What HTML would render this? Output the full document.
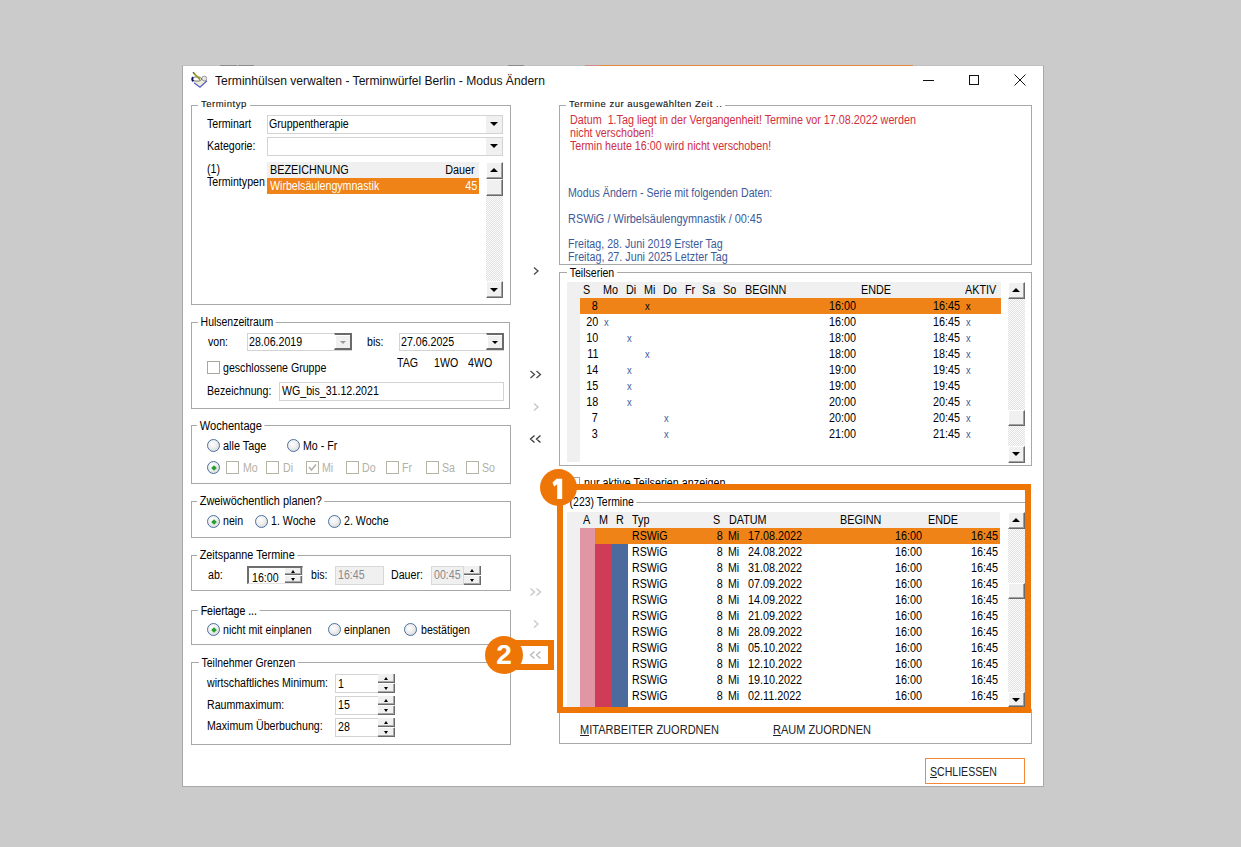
<!DOCTYPE html>
<html><head><meta charset="utf-8">
<style>
html,body{margin:0;padding:0}
body{width:1241px;height:847px;background:#cbcbcb;position:relative;overflow:hidden;font-family:"Liberation Sans",sans-serif}
div{box-sizing:border-box}
.a{position:absolute}
.t{position:absolute;font-size:12px;line-height:14px;white-space:pre;transform-origin:0 0;transform:scaleX(.885);color:#000}
.tr{position:absolute;font-size:12px;line-height:14px;white-space:pre;transform-origin:100% 0;transform:scaleX(.90);color:#000;text-align:right}
.lg{position:absolute;font-size:9.5px;line-height:12px;white-space:pre;letter-spacing:.5px;-webkit-text-stroke:.1px #111;background:#fff;padding:0 3px;color:#111}
.gb{position:absolute;border:1px solid #a8a8a8}
.gl{background:#fff;padding:0 3px}
.rad{position:absolute;width:13px;height:13px;border-radius:50%;border:1.6px solid #4a719e;background:radial-gradient(circle at 40% 35%,#fff 0,#eee 45%,#cfcfcf 100%)}
.rad.on::after{content:"";position:absolute;left:3.6px;top:3.6px;width:4px;height:4px;background:#22a22a;transform:rotate(45deg)}
.chk{position:absolute;width:13px;height:13px;border:1px solid #b5b3a6;background:#fff}
.fld{position:absolute;border:1px solid #d3d3d3;background:#fff}
.dd{position:absolute;background:#f0f0f0}
.tri{position:absolute;width:0;height:0;border-left:4px solid transparent;border-right:4px solid transparent;border-top:4px solid #000}
.triu{position:absolute;width:0;height:0;border-left:4px solid transparent;border-right:4px solid transparent;border-bottom:4px solid #000}
.btn3{position:absolute;background:#f0f0f0;border-top:1px solid #fff;border-left:1px solid #fff;border-right:1px solid #696969;border-bottom:1px solid #696969;box-shadow:inset -1px -1px 0 #a0a0a0}
.track{position:absolute;background:repeating-conic-gradient(#e2e2e2 0 25%,#fbfbfb 0 50%) 0 0/2px 2px}
.or{background:#ef8318}
.sp{position:absolute;background:#f0f0f0;border-right:1px solid #6a6a6a;border-bottom:1px solid #6a6a6a;box-shadow:inset -1px -1px 0 #a8a8a8}
.sa{position:absolute;width:0;height:0;border-left:2.5px solid transparent;border-right:2.5px solid transparent}
</style></head><body>
<div class="a" style="left:182px;top:65px;width:862px;height:722px;background:#fff;border:1px solid #a9a9a9;border-top-color:#c0c0c0"></div>
<div class="a" style="left:220px;top:65px;width:17px;height:1px;background:#8c8c8c"></div>
<div class="a" style="left:238px;top:65px;width:16px;height:1px;background:#8c8c8c"></div>
<div class="a" style="left:508px;top:65px;width:16px;height:1px;background:#8c8c8c"></div>
<div class="a" style="left:585px;top:65px;width:15px;height:1px;background:#d08a8a"></div>
<div class="a" style="left:600px;top:65px;width:313px;height:1px;background:#e58a3a"></div>
<svg class="a" style="left:186px;top:68px" width="26" height="24" viewBox="0 0 26 24">
<path d="M8 13.5 L14.5 9.8 L21 12.3 L14 19.3 Z" fill="#efeed2"/>
<path d="M8 14.8 L14 19.3 L21 12.8" fill="none" stroke="#5558c8" stroke-width="1.2"/>
<circle cx="18.3" cy="10.5" r="2.4" fill="#e8e8e8" stroke="#777" stroke-width="0.7"/>
<ellipse cx="11" cy="11" rx="4.6" ry="2.1" fill="#fff" stroke="#666" stroke-width="0.9"/>
<path d="M7.2 9.3 Q5.2 11.2 7.4 13.4" fill="none" stroke="#12136a" stroke-width="2"/>
<path d="M7.4 4.8 L14.2 11.6" stroke="#9c9a2c" stroke-width="1.9"/>
<path d="M7 4.2 L8 5.2" stroke="#666" stroke-width="1.6"/>
</svg>
<div class="a" style="left:215px;top:74px;font-size:12px;line-height:14px;white-space:pre;color:#111;transform-origin:0 0;transform:scaleX(1.008)">Terminhülsen verwalten - Terminwürfel Berlin - Modus Ändern</div>
<div class="a" style="left:923px;top:80px;width:11px;height:1px;background:#111"></div>
<div class="a" style="left:969px;top:75px;width:10px;height:10px;border:1px solid #111"></div>
<svg class="a" style="left:1014px;top:74px" width="12" height="12" viewBox="0 0 12 12"><path d="M0.5 0.5 L11.5 11.5 M11.5 0.5 L0.5 11.5" stroke="#111" stroke-width="1"/></svg>
<div class="gb" style="left:191px;top:105px;width:320px;height:200px;"></div>
<div class="lg" style="left:198px;top:98px">Termintyp</div>
<div class="t" style="left:207px;top:117px">Terminart</div>
<div class="fld" style="left:267px;top:115px;width:236px;height:19px;"></div>
<div class="dd" style="left:486px;top:116px;width:16px;height:17px;"></div>
<div class="tri" style="left:490px;top:122px"></div>
<div class="t" style="left:269px;top:117px">Gruppentherapie</div>
<div class="t" style="left:207px;top:139px">Kategorie:</div>
<div class="fld" style="left:267px;top:137px;width:236px;height:19px;"></div>
<div class="dd" style="left:486px;top:138px;width:16px;height:17px;"></div>
<div class="tri" style="left:490px;top:144px"></div>
<div class="t" style="left:207px;top:162px">(1)</div>
<div class="t" style="left:207px;top:175px">Termintypen</div>
<div class="a" style="left:267px;top:162px;width:212px;height:16px;background:#f0f0f0"></div>
<div class="t" style="left:270px;top:163px;transform:scaleX(0.9)">BEZEICHNUNG</div>
<div class="tr" style="right:766px;top:163px">Dauer</div>
<div class="a or" style="left:267px;top:178px;width:212px;height:16px;"></div>
<div class="t" style="left:270px;top:179px;color:#fff">Wirbelsäulengymnastik</div>
<div class="tr" style="right:764px;top:179px;color:#fff">45</div>
<div class="track" style="left:486px;top:162px;width:17px;height:136px;"></div>
<div class="btn3" style="left:486px;top:162px;width:17px;height:17px;"></div>
<div class="triu" style="left:490px;top:168px"></div>
<div class="btn3" style="left:486px;top:179px;width:17px;height:17px;"></div>
<div class="btn3" style="left:486px;top:281px;width:17px;height:17px;"></div>
<div class="tri" style="left:490px;top:288px"></div>
<div class="gb" style="left:191px;top:322px;width:319px;height:87px;"></div>
<div class="t gl" style="left:198px;top:315px;transform:scaleX(0.872)">Hulsenzeitraum</div>
<div class="t" style="left:208px;top:335px">von:</div>
<div class="fld" style="left:247px;top:333px;width:105px;height:18px;"></div>
<div class="t" style="left:249px;top:335px">28.06.2019</div>
<div class="a" style="left:334px;top:333px;width:18px;height:17px;background:#f0f0f0;border-top:2px solid #6a6a6a;border-right:2px solid #6a6a6a;border-bottom:2px solid #6a6a6a;border-left:1px solid #fff;box-shadow:inset 1px 1px 0 #fff"></div>
<div class="tri" style="left:340px;top:341px;border-left-width:3px;border-right-width:3px;border-top:3px solid #999"></div>
<div class="t" style="left:367px;top:335px">bis:</div>
<div class="fld" style="left:399px;top:333px;width:105px;height:18px;"></div>
<div class="t" style="left:401px;top:335px">27.06.2025</div>
<div class="a" style="left:486px;top:333px;width:18px;height:17px;background:#f0f0f0;border-top:2px solid #6a6a6a;border-right:2px solid #6a6a6a;border-bottom:2px solid #6a6a6a;border-left:1px solid #fff;box-shadow:inset 1px 1px 0 #fff"></div>
<div class="tri" style="left:492px;top:341px;border-left-width:3px;border-right-width:3px;border-top:3px solid #000"></div>
<div class="t" style="left:397px;top:356px">TAG</div>
<div class="t" style="left:434px;top:356px">1WO</div>
<div class="t" style="left:468px;top:356px">4WO</div>
<div class="chk" style="left:207px;top:361px;width:13px;height:13px;border-color:#a8a8a0"></div>
<div class="t" style="left:223px;top:361px">geschlossene Gruppe</div>
<div class="t" style="left:207px;top:384px">Bezeichnung:</div>
<div class="fld" style="left:279px;top:382px;width:225px;height:19px;"></div>
<div class="t" style="left:282px;top:384px">WG_bis_31.12.2021</div>
<div class="gb" style="left:191px;top:425px;width:320px;height:59px;"></div>
<div class="t gl" style="left:197px;top:419px;transform:scaleX(0.925)">Wochentage</div>
<div class="rad" style="left:207px;top:439px;width:13px;height:13px;"></div>
<div class="t" style="left:223px;top:439px;transform:scaleX(0.907)">alle Tage</div>
<div class="rad" style="left:287px;top:439px;width:13px;height:13px;"></div>
<div class="t" style="left:303px;top:439px">Mo - Fr</div>
<div class="rad on" style="left:207px;top:461px;width:13px;height:13px;"></div>
<div class="chk" style="left:226px;top:461px;width:13px;height:13px;"></div>
<div class="t" style="left:243px;top:461px;color:#b3b1a6">Mo</div>
<div class="chk" style="left:266px;top:461px;width:13px;height:13px;"></div>
<div class="t" style="left:283px;top:461px;color:#b3b1a6">Di</div>
<div class="chk" style="left:306px;top:461px;width:13px;height:13px;"></div>
<div class="t" style="left:322px;top:461px;color:#b3b1a6">Mi</div>
<div class="chk" style="left:346px;top:461px;width:13px;height:13px;"></div>
<div class="t" style="left:362px;top:461px;color:#b3b1a6">Do</div>
<div class="chk" style="left:386px;top:461px;width:13px;height:13px;"></div>
<div class="t" style="left:402px;top:461px;color:#b3b1a6">Fr</div>
<div class="chk" style="left:426px;top:461px;width:13px;height:13px;"></div>
<div class="t" style="left:442px;top:461px;color:#b3b1a6">Sa</div>
<div class="chk" style="left:466px;top:461px;width:13px;height:13px;"></div>
<div class="t" style="left:482px;top:461px;color:#b3b1a6">So</div>
<svg class="a" style="left:307px;top:462px" width="11" height="11"><path d="M2 5 L4.5 8 L9 2.5" fill="none" stroke="#b3b1a6" stroke-width="1.6"/></svg>
<div class="gb" style="left:191px;top:501px;width:320px;height:37px;"></div>
<div class="t gl" style="left:197px;top:494px;transform:scaleX(0.91)">Zweiwöchentlich planen?</div>
<div class="rad on" style="left:207px;top:515px;width:13px;height:13px;"></div>
<div class="t" style="left:223px;top:514px">nein</div>
<div class="rad" style="left:255px;top:515px;width:13px;height:13px;"></div>
<div class="t" style="left:271px;top:514px">1. Woche</div>
<div class="rad" style="left:328px;top:515px;width:13px;height:13px;"></div>
<div class="t" style="left:344px;top:514px">2. Woche</div>
<div class="gb" style="left:191px;top:555px;width:320px;height:36px;"></div>
<div class="t gl" style="left:196.5px;top:548px;transform:scaleX(0.903)">Zeitspanne Termine</div>
<div class="t" style="left:208px;top:568px">ab:</div>
<div class="a" style="left:247px;top:566px;width:56px;height:18px;background:#fff;border-top:2px solid #6e6e6e;border-left:2px solid #6e6e6e;border-right:1px solid #e4e4e4;border-bottom:1px solid #e4e4e4"></div>
<div class="t" style="left:252px;top:571px">16:00</div>
<div class="sp" style="left:285px;top:568px;width:17px;height:7px;"></div>
<div class="sp" style="left:285px;top:576px;width:17px;height:7px;"></div>
<div class="sa" style="left:291.0px;top:570.0px;border-bottom:3px solid #000"></div>
<div class="sa" style="left:291.0px;top:578.0px;border-top:3px solid #000"></div>
<div class="t" style="left:311px;top:568px">bis:</div>
<div class="a" style="left:335px;top:566px;width:49px;height:19px;background:#f0f0f0;border:1px solid #d8d8d8"></div>
<div class="t" style="left:338px;top:568px;color:#8a8a8a">16:45</div>
<div class="t" style="left:391px;top:568px">Dauer:</div>
<div class="a" style="left:431px;top:566px;width:33px;height:19px;background:#f0f0f0;border:1px solid #d8d8d8"></div>
<div class="t" style="left:434px;top:568px;color:#8a8a8a">00:45</div>
<div class="sp" style="left:464px;top:566px;width:17px;height:9px;"></div>
<div class="sp" style="left:464px;top:576px;width:17px;height:9px;"></div>
<div class="sa" style="left:470.0px;top:569.0px;border-bottom:3px solid #000"></div>
<div class="sa" style="left:470.0px;top:579.0px;border-top:3px solid #000"></div>
<div class="gb" style="left:191px;top:610px;width:320px;height:35px;"></div>
<div class="t gl" style="left:197.5px;top:604px;transform:scaleX(0.88);-webkit-text-stroke:.1px #000">Feiertage ...</div>
<div class="rad on" style="left:207px;top:623px;width:13px;height:13px;"></div>
<div class="t" style="left:223px;top:623px">nicht mit einplanen</div>
<div class="rad" style="left:328px;top:623px;width:13px;height:13px;"></div>
<div class="t" style="left:344px;top:623px">einplanen</div>
<div class="rad" style="left:404px;top:623px;width:13px;height:13px;"></div>
<div class="t" style="left:421px;top:623px">bestätigen</div>
<div class="gb" style="left:191px;top:662px;width:320px;height:83px;"></div>
<div class="t gl" style="left:199px;top:656px;transform:scaleX(0.868)">Teilnehmer Grenzen</div>
<div class="t" style="left:207px;top:676px">wirtschaftliches Minimum:</div>
<div class="fld" style="left:335px;top:674px;width:60px;height:19px;"></div>
<div class="t" style="left:338px;top:677px">1</div>
<div class="sp" style="left:378px;top:674px;width:17px;height:9px;"></div>
<div class="sp" style="left:378px;top:684px;width:17px;height:9px;"></div>
<div class="sa" style="left:384.0px;top:677.0px;border-bottom:3px solid #000"></div>
<div class="sa" style="left:384.0px;top:687.0px;border-top:3px solid #000"></div>
<div class="t" style="left:207px;top:698px">Raummaximum:</div>
<div class="fld" style="left:335px;top:696px;width:60px;height:19px;"></div>
<div class="t" style="left:338px;top:698px">15</div>
<div class="sp" style="left:378px;top:696px;width:17px;height:9px;"></div>
<div class="sp" style="left:378px;top:706px;width:17px;height:9px;"></div>
<div class="sa" style="left:384.0px;top:699.0px;border-bottom:3px solid #000"></div>
<div class="sa" style="left:384.0px;top:709.0px;border-top:3px solid #000"></div>
<div class="t" style="left:207px;top:719px">Maximum Überbuchung:</div>
<div class="fld" style="left:335px;top:718px;width:60px;height:19px;"></div>
<div class="t" style="left:338px;top:720px">28</div>
<div class="sp" style="left:378px;top:718px;width:17px;height:9px;"></div>
<div class="sp" style="left:378px;top:728px;width:17px;height:9px;"></div>
<div class="sa" style="left:384.0px;top:721.0px;border-bottom:3px solid #000"></div>
<div class="sa" style="left:384.0px;top:731.0px;border-top:3px solid #000"></div>
<svg class="a" style="left:528px;top:264px" width="16" height="400" viewBox="0 0 16 400">
<g fill="none" stroke-width="1.3">
<path d="M6 3.5 L10 7 L6 10.5" stroke="#4a4a4a"/>
<path d="M2.5 107 L6.5 110.5 L2.5 114 M8.5 107 L12.5 110.5 L8.5 114" stroke="#4a4a4a"/>
<path d="M6 139.5 L10 143 L6 146.5" stroke="#c4c4c4"/>
<path d="M6.5 171.5 L2.5 175 L6.5 178.5 M12.5 171.5 L8.5 175 L12.5 178.5" stroke="#3a3a3a"/>
<path d="M2.5 324.5 L6.5 328 L2.5 331.5 M8.5 324.5 L12.5 328 L8.5 331.5" stroke="#c8c8c8"/>
<path d="M6 356.5 L10 360 L6 363.5" stroke="#c8c8c8"/>
<path d="M6.5 387.5 L2.5 391 L6.5 394.5 M12.5 387.5 L8.5 391 L12.5 394.5" stroke="#b8b8b8"/>
</g></svg>
<div class="gb" style="left:559px;top:105px;width:473px;height:160px;"></div>
<div class="lg" style="left:566px;top:98px">Termine zur ausgewählten Zeit ..</div>
<div class="t" style="left:570px;top:113px;transform:scaleX(0.896);color:#d02e3e">Datum  1.Tag liegt in der Vergangenheit! Termine vor 17.08.2022 werden</div>
<div class="t" style="left:570px;top:126px;transform:scaleX(0.89);color:#d02e3e">nicht verschoben!</div>
<div class="t" style="left:570px;top:139px;transform:scaleX(0.892);color:#d02e3e">Termin heute 16:00 wird nicht verschoben!</div>
<div class="t" style="left:568px;top:186px;color:#3c5a9a">Modus Ändern - Serie mit folgenden Daten:</div>
<div class="t" style="left:568px;top:212px;transform:scaleX(0.909);color:#3c5a9a">RSWiG / Wirbelsäulengymnastik / 00:45</div>
<div class="t" style="left:568px;top:237px;transform:scaleX(0.89);color:#3c5a9a">Freitag, 28. Juni 2019 Erster Tag</div>
<div class="t" style="left:568px;top:250px;transform:scaleX(0.895);color:#3c5a9a">Freitag, 27. Juni 2025 Letzter Tag</div>
<div class="gb" style="left:559px;top:272px;width:473px;height:194px;"></div>
<div class="t gl" style="left:567px;top:266px;transform:scaleX(0.88)">Teilserien</div>
<div class="a" style="left:567px;top:282px;width:434px;height:16px;background:#f0f0f0"></div>
<div class="a" style="left:567px;top:298px;width:13px;height:164px;background:#f0f0f0"></div>
<div class="a or" style="left:580px;top:298px;width:421px;height:16px;"></div>
<div class="t" style="left:583px;top:283px;transform:scaleX(0.9)">S</div>
<div class="t" style="left:603px;top:283px;transform:scaleX(0.9)">Mo</div>
<div class="t" style="left:626px;top:283px;transform:scaleX(0.9)">Di</div>
<div class="t" style="left:644px;top:283px;transform:scaleX(0.9)">Mi</div>
<div class="t" style="left:663px;top:283px;transform:scaleX(0.9)">Do</div>
<div class="t" style="left:685px;top:283px;transform:scaleX(0.9)">Fr</div>
<div class="t" style="left:702px;top:283px;transform:scaleX(0.9)">Sa</div>
<div class="t" style="left:723px;top:283px;transform:scaleX(0.9)">So</div>
<div class="t" style="left:745px;top:283px;transform:scaleX(0.9)">BEGINN</div>
<div class="t" style="left:861px;top:283px;transform:scaleX(0.9)">ENDE</div>
<div class="t" style="left:965px;top:283px;transform:scaleX(0.9)">AKTIV</div>
<div class="tr" style="right:643px;top:299px">8</div>
<div class="t" style="left:645px;top:299px;transform:scaleX(0.85);color:#000;font-size:11px">x</div>
<div class="tr" style="right:385px;top:299px">16:00</div>
<div class="tr" style="right:281px;top:299px">16:45</div>
<div class="t" style="left:966px;top:299px;transform:scaleX(0.85);color:#000;font-size:11px">x</div>
<div class="tr" style="right:643px;top:315px">20</div>
<div class="t" style="left:604px;top:315px;transform:scaleX(0.85);color:#3c5a9a;font-size:11px">x</div>
<div class="tr" style="right:385px;top:315px">16:00</div>
<div class="tr" style="right:281px;top:315px">16:45</div>
<div class="t" style="left:966px;top:315px;transform:scaleX(0.85);color:#3c5a9a;font-size:11px">x</div>
<div class="tr" style="right:643px;top:331px">10</div>
<div class="t" style="left:627px;top:331px;transform:scaleX(0.85);color:#3c5a9a;font-size:11px">x</div>
<div class="tr" style="right:385px;top:331px">18:00</div>
<div class="tr" style="right:281px;top:331px">18:45</div>
<div class="t" style="left:966px;top:331px;transform:scaleX(0.85);color:#3c5a9a;font-size:11px">x</div>
<div class="tr" style="right:643px;top:347px">11</div>
<div class="t" style="left:645px;top:347px;transform:scaleX(0.85);color:#3c5a9a;font-size:11px">x</div>
<div class="tr" style="right:385px;top:347px">18:00</div>
<div class="tr" style="right:281px;top:347px">18:45</div>
<div class="t" style="left:966px;top:347px;transform:scaleX(0.85);color:#3c5a9a;font-size:11px">x</div>
<div class="tr" style="right:643px;top:363px">14</div>
<div class="t" style="left:627px;top:363px;transform:scaleX(0.85);color:#3c5a9a;font-size:11px">x</div>
<div class="tr" style="right:385px;top:363px">19:00</div>
<div class="tr" style="right:281px;top:363px">19:45</div>
<div class="t" style="left:966px;top:363px;transform:scaleX(0.85);color:#3c5a9a;font-size:11px">x</div>
<div class="tr" style="right:643px;top:379px">15</div>
<div class="t" style="left:627px;top:379px;transform:scaleX(0.85);color:#3c5a9a;font-size:11px">x</div>
<div class="tr" style="right:385px;top:379px">19:00</div>
<div class="tr" style="right:281px;top:379px">19:45</div>
<div class="tr" style="right:643px;top:395px">18</div>
<div class="t" style="left:627px;top:395px;transform:scaleX(0.85);color:#3c5a9a;font-size:11px">x</div>
<div class="tr" style="right:385px;top:395px">20:00</div>
<div class="tr" style="right:281px;top:395px">20:45</div>
<div class="t" style="left:966px;top:395px;transform:scaleX(0.85);color:#3c5a9a;font-size:11px">x</div>
<div class="tr" style="right:643px;top:411px">7</div>
<div class="t" style="left:664px;top:411px;transform:scaleX(0.85);color:#3c5a9a;font-size:11px">x</div>
<div class="tr" style="right:385px;top:411px">20:00</div>
<div class="tr" style="right:281px;top:411px">20:45</div>
<div class="t" style="left:966px;top:411px;transform:scaleX(0.85);color:#3c5a9a;font-size:11px">x</div>
<div class="tr" style="right:643px;top:427px">3</div>
<div class="t" style="left:664px;top:427px;transform:scaleX(0.85);color:#3c5a9a;font-size:11px">x</div>
<div class="tr" style="right:385px;top:427px">21:00</div>
<div class="tr" style="right:281px;top:427px">21:45</div>
<div class="t" style="left:966px;top:427px;transform:scaleX(0.85);color:#3c5a9a;font-size:11px">x</div>
<div class="track" style="left:1008px;top:282px;width:17px;height:181px;"></div>
<div class="btn3" style="left:1008px;top:282px;width:17px;height:17px;"></div>
<div class="triu" style="left:1012px;top:288px"></div>
<div class="btn3" style="left:1008px;top:410px;width:17px;height:16px;"></div>
<div class="btn3" style="left:1008px;top:446px;width:17px;height:17px;"></div>
<div class="tri" style="left:1012px;top:452px"></div>
<div class="chk" style="left:567px;top:477px;width:13px;height:13px;border-color:#a3a89e"></div>
<div class="t" style="left:584px;top:476px;transform:scaleX(0.896)">nur aktive Teilserien anzeigen</div>
<div class="gb" style="left:559px;top:502px;width:472px;height:209px;"></div>
<div class="t gl" style="left:566.5px;top:495px;transform:scaleX(0.869)">(223) Termine</div>
<div class="a" style="left:567px;top:512px;width:433px;height:16px;background:#f0f0f0"></div>
<div class="a" style="left:567px;top:528px;width:13px;height:179px;background:#f0f0f0"></div>
<div class="a" style="left:580px;top:528px;width:15px;height:179px;background:#e196a5"></div>
<div class="a" style="left:595px;top:544px;width:17px;height:163px;background:#cf3c58"></div>
<div class="a" style="left:612px;top:544px;width:16px;height:163px;background:#4b6a9d"></div>
<div class="a or" style="left:595px;top:528px;width:405px;height:16px;"></div>
<div class="a" style="left:567px;top:512px;width:433px;height:195px;overflow:hidden">
<div class="t" style="left:16px;top:1px;transform:scaleX(0.9)">A</div>
<div class="t" style="left:32px;top:1px;transform:scaleX(0.9)">M</div>
<div class="t" style="left:49px;top:1px;transform:scaleX(0.9)">R</div>
<div class="t" style="left:65px;top:1px;transform:scaleX(0.9)">Typ</div>
<div class="t" style="left:146px;top:1px;transform:scaleX(0.9)">S</div>
<div class="t" style="left:162px;top:1px;transform:scaleX(0.9)">DATUM</div>
<div class="t" style="left:273px;top:1px;transform:scaleX(0.9)">BEGINN</div>
<div class="t" style="left:361px;top:1px;transform:scaleX(0.9)">ENDE</div>
<div class="t" style="left:65px;top:17px">RSWiG</div>
<div class="tr" style="right:277px;top:17px">8</div>
<div class="t" style="left:161px;top:17px">Mi</div>
<div class="t" style="left:181px;top:17px;transform:scaleX(0.9)">17.08.2022</div>
<div class="tr" style="right:78px;top:17px">16:00</div>
<div class="tr" style="right:2px;top:17px">16:45</div>
<div class="t" style="left:65px;top:33px">RSWiG</div>
<div class="tr" style="right:277px;top:33px">8</div>
<div class="t" style="left:161px;top:33px">Mi</div>
<div class="t" style="left:181px;top:33px;transform:scaleX(0.9)">24.08.2022</div>
<div class="tr" style="right:78px;top:33px">16:00</div>
<div class="tr" style="right:2px;top:33px">16:45</div>
<div class="t" style="left:65px;top:49px">RSWiG</div>
<div class="tr" style="right:277px;top:49px">8</div>
<div class="t" style="left:161px;top:49px">Mi</div>
<div class="t" style="left:181px;top:49px;transform:scaleX(0.9)">31.08.2022</div>
<div class="tr" style="right:78px;top:49px">16:00</div>
<div class="tr" style="right:2px;top:49px">16:45</div>
<div class="t" style="left:65px;top:65px">RSWiG</div>
<div class="tr" style="right:277px;top:65px">8</div>
<div class="t" style="left:161px;top:65px">Mi</div>
<div class="t" style="left:181px;top:65px;transform:scaleX(0.9)">07.09.2022</div>
<div class="tr" style="right:78px;top:65px">16:00</div>
<div class="tr" style="right:2px;top:65px">16:45</div>
<div class="t" style="left:65px;top:81px">RSWiG</div>
<div class="tr" style="right:277px;top:81px">8</div>
<div class="t" style="left:161px;top:81px">Mi</div>
<div class="t" style="left:181px;top:81px;transform:scaleX(0.9)">14.09.2022</div>
<div class="tr" style="right:78px;top:81px">16:00</div>
<div class="tr" style="right:2px;top:81px">16:45</div>
<div class="t" style="left:65px;top:97px">RSWiG</div>
<div class="tr" style="right:277px;top:97px">8</div>
<div class="t" style="left:161px;top:97px">Mi</div>
<div class="t" style="left:181px;top:97px;transform:scaleX(0.9)">21.09.2022</div>
<div class="tr" style="right:78px;top:97px">16:00</div>
<div class="tr" style="right:2px;top:97px">16:45</div>
<div class="t" style="left:65px;top:113px">RSWiG</div>
<div class="tr" style="right:277px;top:113px">8</div>
<div class="t" style="left:161px;top:113px">Mi</div>
<div class="t" style="left:181px;top:113px;transform:scaleX(0.9)">28.09.2022</div>
<div class="tr" style="right:78px;top:113px">16:00</div>
<div class="tr" style="right:2px;top:113px">16:45</div>
<div class="t" style="left:65px;top:129px">RSWiG</div>
<div class="tr" style="right:277px;top:129px">8</div>
<div class="t" style="left:161px;top:129px">Mi</div>
<div class="t" style="left:181px;top:129px;transform:scaleX(0.9)">05.10.2022</div>
<div class="tr" style="right:78px;top:129px">16:00</div>
<div class="tr" style="right:2px;top:129px">16:45</div>
<div class="t" style="left:65px;top:145px">RSWiG</div>
<div class="tr" style="right:277px;top:145px">8</div>
<div class="t" style="left:161px;top:145px">Mi</div>
<div class="t" style="left:181px;top:145px;transform:scaleX(0.9)">12.10.2022</div>
<div class="tr" style="right:78px;top:145px">16:00</div>
<div class="tr" style="right:2px;top:145px">16:45</div>
<div class="t" style="left:65px;top:161px">RSWiG</div>
<div class="tr" style="right:277px;top:161px">8</div>
<div class="t" style="left:161px;top:161px">Mi</div>
<div class="t" style="left:181px;top:161px;transform:scaleX(0.9)">19.10.2022</div>
<div class="tr" style="right:78px;top:161px">16:00</div>
<div class="tr" style="right:2px;top:161px">16:45</div>
<div class="t" style="left:65px;top:177px">RSWiG</div>
<div class="tr" style="right:277px;top:177px">8</div>
<div class="t" style="left:161px;top:177px">Mi</div>
<div class="t" style="left:181px;top:177px;transform:scaleX(0.9)">02.11.2022</div>
<div class="tr" style="right:78px;top:177px">16:00</div>
<div class="tr" style="right:2px;top:177px">16:45</div>
<div class="t" style="left:65px;top:193px">RSWiG</div>
<div class="tr" style="right:277px;top:193px">8</div>
<div class="t" style="left:161px;top:193px">Mi</div>
<div class="t" style="left:181px;top:193px;transform:scaleX(0.9)">09.11.2022</div>
<div class="tr" style="right:78px;top:193px">16:00</div>
<div class="tr" style="right:2px;top:193px">16:45</div>
</div>
<div class="track" style="left:1008px;top:512px;width:17px;height:195px;"></div>
<div class="btn3" style="left:1008px;top:512px;width:17px;height:17px;"></div>
<div class="triu" style="left:1012px;top:518px"></div>
<div class="btn3" style="left:1008px;top:583px;width:17px;height:16px;"></div>
<div class="btn3" style="left:1008px;top:692px;width:17px;height:15px;"></div>
<div class="tri" style="left:1012px;top:698px"></div>
<div class="gb" style="left:559px;top:709px;width:473px;height:35px;"></div>
<div class="t" style="left:580px;top:723px;transform:scaleX(0.919);color:#222">MITARBEITER ZUORDNEN</div>
<div class="a" style="left:580px;top:735px;width:9px;height:1px;background:#222"></div>
<div class="t" style="left:773px;top:723px;transform:scaleX(0.919);color:#222">RAUM ZUORDNEN</div>
<div class="a" style="left:773px;top:735px;width:8px;height:1px;background:#222"></div>
<div class="a" style="left:925px;top:758px;width:100px;height:26px;border:1px solid #f28a3a;background:#fff"></div>
<div class="t" style="left:930px;top:765px;transform:scaleX(0.88);color:#222">SCHLIESSEN</div>
<div class="a" style="left:930px;top:777px;width:7px;height:1px;background:#222"></div>
<div class="a" style="left:557px;top:484px;width:474px;height:229px;border:6px solid #ee7606"></div>
<div class="a" style="left:540px;top:469px;width:37px;height:37px;border-radius:50%;background:#ee7606"></div>
<svg class="a" style="left:0;top:0" width="1241" height="847"><path d="M552.5 482.4 L556.6 478.8 L562.2 478.8 L562.2 499.1 L557.2 499.1 L557.2 484.3 L554.2 486.6 Z" fill="#fff"/></svg>
<div class="a" style="left:505px;top:640px;width:49px;height:30px;border:6px solid #ee7606"></div>
<div class="a" style="left:485px;top:636px;width:38px;height:38px;border-radius:50%;background:#ee7606"></div>
<div class="a" style="left:494px;top:637px;width:20px;font:bold 28px/36px 'Liberation Sans',sans-serif;color:#fff;text-align:center">2</div>
</body></html>
